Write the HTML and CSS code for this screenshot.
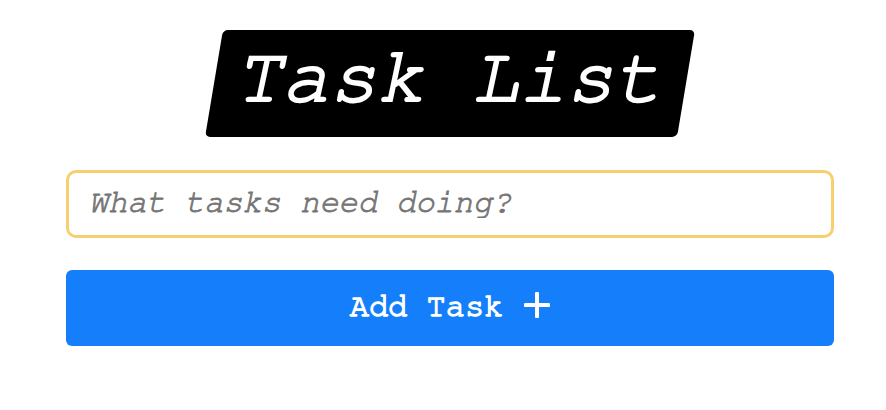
FILE: index.html
```html
<!DOCTYPE html>
<html lang="en">
<head>
<meta charset="utf-8">
<title>Task List</title>
<link rel="stylesheet" href="styles.css">
</head>
<body>
<main class="app">
  <header class="title-wrap">
    <h1 class="title"><span class="title-text">Task List</span></h1>
  </header>
  <form class="task-form" onsubmit="return false">
    <input class="task-input" type="text" placeholder="What tasks need doing?">
    <button class="add-btn" type="submit"><span class="btn-label">Add Task</span><svg class="plus" width="26" height="26" viewBox="0 0 26 26" aria-hidden="true"><path d="M13 1.5v23M1.5 13h23" stroke="#fff" stroke-width="4" stroke-linecap="round" fill="none"/></svg></button>
  </form>
</main>
</body>
</html>
```
FILE: styles.css
```css
* { box-sizing: border-box; }
html, body { margin: 0; padding: 0; background: #fff; }
body { font-family: FreeMono, "Courier New", "Liberation Mono", monospace; }
.app {
  width: 768px;
  margin-left: 66px;
  padding-top: 30px;
  display: flex;
  flex-direction: column;
  align-items: stretch;
}
.title-wrap { display: flex; justify-content: center; }
.title {
  position: relative;
  margin: 0;
  width: 472px;
  height: 107px;
  display: flex;
  align-items: center;
  justify-content: center;
  font-weight: normal;
}
.title::before {
  content: "";
  position: absolute;
  inset: 0;
  background: #000;
  border-radius: 5px;
  transform: skewX(-9.5deg);
}
.title-text {
  position: relative;
  color: #fff;
  font-family: FreeMono, "Courier New", monospace;
  font-style: italic;
  font-size: 79px;
  line-height: 1;
  margin-top: -13px;
  margin-left: -4px;
  -webkit-text-stroke: 2.2px #fff;
}
.task-form {
  display: flex;
  flex-direction: column;
  gap: 32px;
  margin-top: 33px;
}
.task-input {
  display: block;
  width: 100%;
  height: 68px;
  border: 3px solid #f8cf6e;
  border-radius: 10px;
  padding: 0 20px 4px;
  font-family: FreeMono, "Courier New", monospace;
  font-size: 32px;
  font-style: italic;
  color: #333;
  outline: none;
}
.task-input::placeholder { color: #757575; font-style: italic; -webkit-text-stroke: 0.8px #757575; }
.add-btn {
  display: flex;
  align-items: center;
  justify-content: center;
  gap: 21px;
  width: 100%;
  height: 76px;
  border: none;
  border-radius: 6px;
  background: #157ffb;
  color: #fff;
  font-family: FreeMono, "Courier New", monospace;
  font-weight: normal;
  font-size: 32px;
  padding: 0 0 4px;
}
.btn-label { -webkit-text-stroke: 1.4px #fff; }
.plus { display: block; margin-top: -2px; }
```
